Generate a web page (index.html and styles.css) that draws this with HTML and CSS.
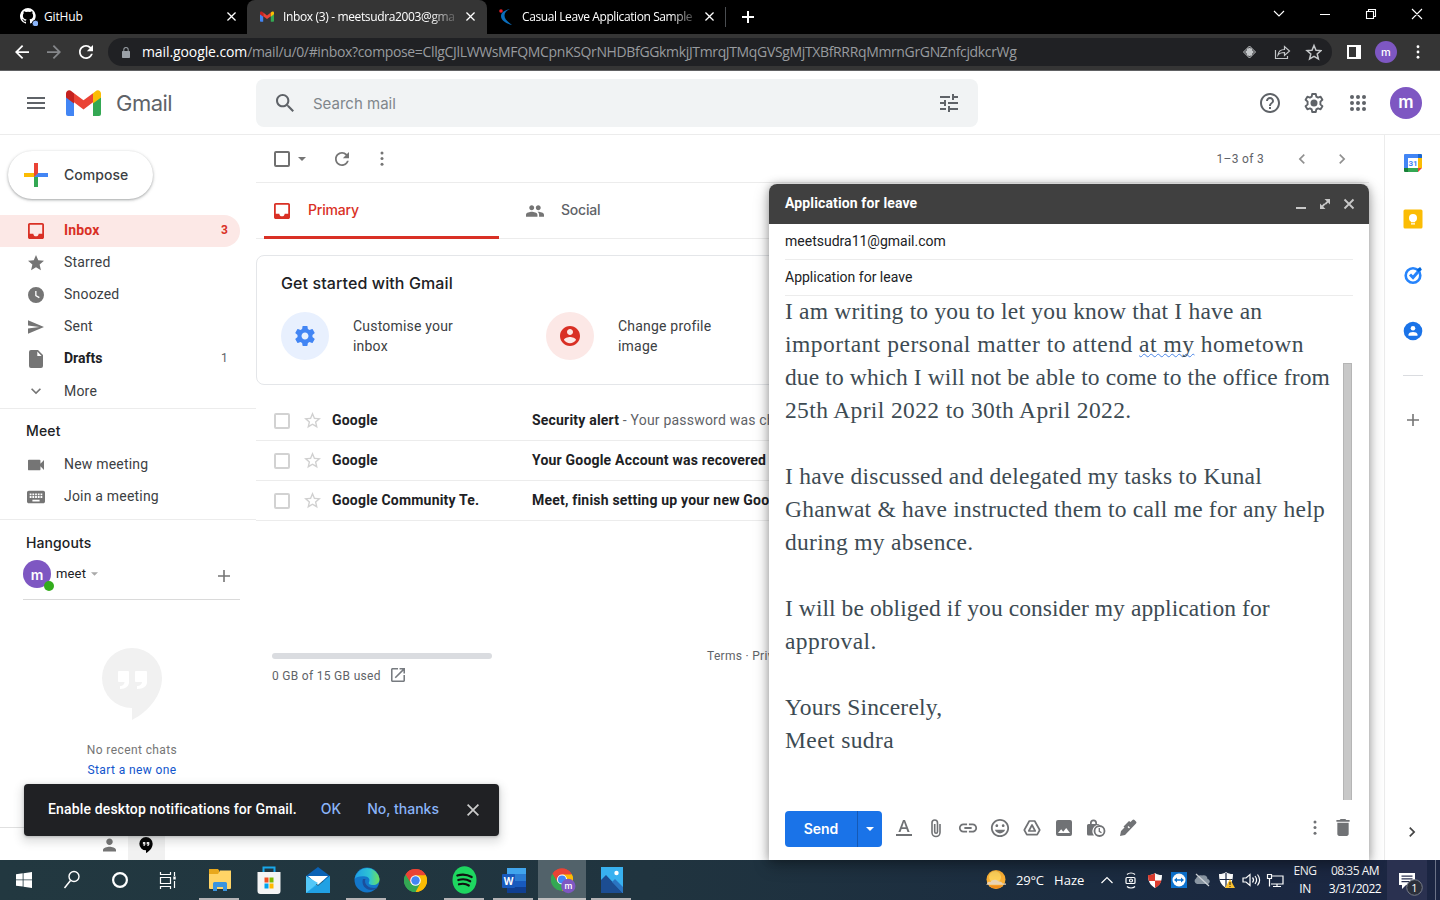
FILE: index.html
```html
<!DOCTYPE html>
<html lang="en">
<head>
<meta charset="utf-8">
<title>Inbox (3) - Gmail</title>
<link rel="stylesheet" href="styles.css">
</head>
<body>
<svg class="sprite" width="0" height="0">
  <symbol id="inbox" viewBox="3 3 18 18"><path d="M19 3H5c-1.1 0-2 .9-2 2v14c0 1.1.9 2 2 2h14c1.1 0 2-.9 2-2V5c0-1.1-.9-2-2-2zm0 12h-4c0 1.66-1.35 3-3 3s-3-1.34-3-3H5V5h14v10z"/></symbol>
  <symbol id="star" viewBox="2 2 20 20"><path d="M12 17.27L18.18 21l-1.64-7.03L22 9.24l-7.19-.61L12 2 9.19 8.63 2 9.24l5.46 4.73L5.82 21z"/></symbol>
  <symbol id="star-o" viewBox="2 2 20 20"><path d="M22 9.24l-7.19-.62L12 2 9.19 8.63 2 9.24l5.46 4.73L5.82 21 12 17.27 18.18 21l-1.63-7.03L22 9.24zM12 15.4l-3.76 2.27 1-4.28-3.32-2.88 4.38-.38L12 6.1l1.71 4.04 4.38.38-3.32 2.88 1 4.28L12 15.4z"/></symbol>
  <symbol id="gear" viewBox="2 2 20 20"><path d="M19.43 12.98c.04-.32.07-.64.07-.98s-.03-.66-.07-.98l2.11-1.65c.19-.15.24-.42.12-.64l-2-3.46c-.12-.22-.39-.3-.61-.22l-2.49 1c-.52-.4-1.08-.73-1.69-.98l-.38-2.65C14.46 2.18 14.25 2 14 2h-4c-.25 0-.46.18-.49.42l-.38 2.65c-.61.25-1.17.59-1.69.98l-2.49-1c-.23-.09-.49 0-.61.22l-2 3.46c-.13.22-.07.49.12.64l2.11 1.65c-.04.32-.07.65-.07.98s.03.66.07.98l-2.11 1.65c-.19.15-.24.42-.12.64l2 3.46c.12.22.39.3.61.22l2.49-1c.52.4 1.08.73 1.69.98l.38 2.65c.03.24.24.42.49.42h4c.25 0 .46-.18.49-.42l.38-2.65c.61-.25 1.17-.59 1.69-.98l2.49 1c.23.09.49 0 .61-.22l2-3.46c.12-.22.07-.49-.12-.64l-2.11-1.65zM12 15.5c-1.93 0-3.5-1.57-3.5-3.5s1.57-3.5 3.5-3.5 3.5 1.57 3.5 3.5-1.57 3.5-3.5 3.5z"/></symbol>
  <symbol id="x" viewBox="5 5 14 14"><path d="M19 6.41L17.59 5 12 10.59 6.41 5 5 6.41 10.59 12 5 17.59 6.41 19 12 13.41 17.59 19 19 17.59 13.41 12z"/></symbol>
  <symbol id="left" viewBox="0 0 24 24"><path d="M15.41 7.41L14 6l-6 6 6 6 1.41-1.41L10.83 12z"/></symbol>
  <symbol id="right" viewBox="0 0 24 24"><path d="M10 6L8.59 7.41 13.17 12l-4.58 4.59L10 18l6-6z"/></symbol>
  <symbol id="down" viewBox="0 0 24 24"><path d="M16.59 8.59L12 13.17 7.41 8.59 6 10l6 6 6-6z"/></symbol>
  <symbol id="caret" viewBox="0 0 8 4"><path d="M0 0h8L4 4z"/></symbol>
  <symbol id="dots" viewBox="8 2 8 20"><circle cx="12" cy="4.5" r="2"/><circle cx="12" cy="12" r="2"/><circle cx="12" cy="19.5" r="2"/></symbol>
  <symbol id="refresh" viewBox="4 4 16 16"><path d="M17.65 6.35C16.2 4.9 14.21 4 12 4c-4.42 0-7.99 3.58-7.99 8s3.57 8 7.99 8c3.73 0 6.84-2.55 7.73-6h-2.08c-.82 2.33-3.04 4-5.65 4-3.31 0-6-2.69-6-6s2.69-6 6-6c1.66 0 3.14.69 4.22 1.78L13 11h7V4l-2.35 2.35z"/></symbol>
  <symbol id="arrow" viewBox="4 4 16 16"><path d="M20 11H7.83l5.59-5.59L12 4l-8 8 8 8 1.41-1.41L7.83 13H20v-2z"/></symbol>
  <symbol id="plus" viewBox="0 0 12 12"><path d="M5.2 0h1.6v5.2H12v1.6H6.8V12H5.2V6.8H0V5.2h5.2z"/></symbol>
  <symbol id="person" viewBox="4 4 16 16"><path d="M12 12c2.21 0 4-1.79 4-4s-1.79-4-4-4-4 1.79-4 4 1.790 4 4 4zm0 2c-2.67 0-8 1.340-8 4v2h16v-2c0-2.660-5.330-4-8-4z"/></symbol>
  <symbol id="hangout" viewBox="0 0 60 72"><path fill-rule="evenodd" d="M30 0a30 30 0 1 0 0 60v12c14-7 30-23 30-42A30 30 0 0 0 30 0zM16 24a1 1 0 0 1 1-1h9a1 1 0 0 1 1 1v10c0 4-3 7-9 7v-3c3 0 4.500-2 4.500-4H17a1 1 0 0 1-1-1zM33 24a1 1 0 0 1 1-1h10a1 1 0 0 1 1 1v10c0 4-3 7-10 7v-3c3 0 5-2 5-4h-6a1 1 0 0 1-1-1z"/></symbol>
  <symbol id="gmail" viewBox="0 0 35 26"><path fill="#4285f4" d="M0 7v17a2 2 0 0 0 2 2h6V12z"/><path fill="#34a853" d="M27 12v14h6a2 2 0 0 0 2-2V7z"/><path fill="#ea4335" d="M8 3.200v9L17.500 19.400 27 12.200V3.200l-9.500 7z"/><path fill="#c5221f" d="M0 3.500V7.500l8 6V3.200L5.500 1.200C3.300-.8 0 .600 0 3.500z"/><path fill="#fbbc04" d="M27 3.200v10.300l8-6v-4c0-2.900-3.300-4.300-5.500-2.300z"/></symbol>
  <symbol id="chrome" viewBox="0 0 24 24"><path fill="#ea4335" d="M12 12 1.600 6A12 12 0 0 1 22.400 6z"/><path fill="#fbbc04" d="M12 12 22.400 6A12 12 0 0 1 12 24z"/><path fill="#34a853" d="M12 12v12A12 12 0 0 1 1.600 6z"/><path fill="#ea4335" d="M12 6.500h10.700L22.400 6A12 12 0 0 0 1.600 6L7 15z"/><path fill="#fbbc04" d="M22.700 6.500H12l4.800 8.300L12 24A12 12 0 0 0 22.700 6.500z"/><path fill="#34a853" d="M1.600 6l5.600 8.800H17L12 24A12 12 0 0 1 1.600 6z"/><circle cx="12" cy="12" r="5.500" fill="#fff"/><circle cx="12" cy="12" r="4.400" fill="#4285f4"/></symbol>
</svg>
<div class="screen">
  <div class="tabstrip">
    <div class="tab tab-github">
      <svg class="ico-18" viewBox="0 0 18 18"><path fill="#fff" d="M8 0a8 8 0 0 0-2.530 15.590c.4.070.550-.170.550-.380V13.700c-2.230.490-2.690-1.070-2.690-1.070-.360-.930-.890-1.170-.890-1.170-.730-.5.050-.490.050-.490.810.060 1.230.830 1.230.830.720 1.220 1.880.870 2.330.670.070-.520.280-.870.510-1.070-1.780-.2-3.640-.890-3.640-3.950 0-.870.310-1.590.820-2.150-.080-.2-.360-1.020.080-2.120 0 0 .670-.220 2.200.820a7.500 7.500 0 0 1 4 0c1.530-1.040 2.200-.820 2.200-.820.440 1.100.160 1.920.080 2.120.510.560.820 1.270.820 2.150 0 3.070-1.870 3.750-3.650 3.950.290.250.540.730.540 1.480v2.200c0 .210.150.460.550.380A8 8 0 0 0 8 0z"/><circle cx="15.500" cy="15.500" r="3.300" fill="#8ab4f8" stroke="#000" stroke-width=".8"/></svg>
      <span class="tab-title t-github">GitHub</span>
      <svg class="tab-x"><use href="#x"/></svg>
    </div>
    <div class="tab tab-active">
      <svg class="tab-gmail"><use href="#gmail"/></svg>
      <span class="tab-title fade-grey">Inbox (3) - meetsudra2003@gma</span>
      <svg class="tab-x"><use href="#x"/></svg>
    </div>
    <div class="tab tab-leave">
      <svg class="ico-16" viewBox="0 0 16 16"><path fill="#0a6ebd" d="M11 0C5 1.500 2 3.500 2 7c0 4.500 5 7.500 11 9C8 12 5.500 10 5.500 6.500 5.500 3.500 7.500 1.500 11 0z"/><circle cx="2" cy="2" r="1.800" fill="#e8202a"/></svg>
      <span class="tab-title fade-black">Casual Leave Application Sample</span>
      <svg class="tab-x"><use href="#x"/></svg>
    </div>
    <div class="tab-sep"></div>
    <svg class="newtab" viewBox="0 0 12 12"><path d="M5 0h2v5h5v2H7v5H5V7H0V5h5z"/></svg>
    <svg class="winctl" viewBox="0 0 150 20"><path d="M1 7l5 5 5-5M47 10.500h10M93.500 7.500h7v7h-7zM95.500 7.500v-2h7v7h-2M139 5l10 10M149 5l-10 10" fill="none" stroke="#fff" stroke-width="1.100"/></svg>
  </div>
  <div class="toolbar">
    <svg class="nav-ico"><use href="#arrow"/></svg>
    <svg class="nav-ico fwd"><use href="#arrow"/></svg>
    <svg class="nav-ico"><use href="#refresh"/></svg>
    <div class="omnibox">
      <svg class="lock" viewBox="0 0 8 11"><path fill="#9aa0a6" fill-rule="evenodd" d="M1.300 4V2.700a2.700 2.700 0 0 1 5.400 0V4H7.300a.7.7 0 0 1 .7.700v5.600a.7.7 0 0 1-.7.700H.7a.7.7 0 0 1-.7-.7V4.700A.7.7 0 0 1 .7 4zM2.300 4h3.400V2.700a1.700 1.700 0 0 0-3.400 0z"/></svg>
      <span class="url"><b>mail.google.com</b><i>/mail/u/0/#inbox?compose=CllgCJlLWWsMFQMCpnKSQrNHDBfGGkmkjJTmrqJTMqGVSgMjTXBfRRRqMmrnGrGNZnfcjdkcrWg</i></span>
      <svg class="omni-icons" viewBox="0 0 80 20"><path d="M7.500 4L1.500 10l6 6 6-6z" fill="none" stroke="#c4c7c9" stroke-width="1"/><path d="M7.500 5.500 12 10l-4.500 4.500L3 10z" fill="#c4c7c9"/><path d="M5 6.500h5v7H5z" fill="#c4c7c9"/><path d="M33.500 8v8.500h12V14M36 13c.5-4 3-5.500 6.500-5.500V4.500l5 4.500-5 4.500V10.500c-3 0-5 .5-6.500 2.500z" fill="none" stroke="#c4c7c9" stroke-width="1.200"/><path d="M72 3.500l2 4.700 5 .400-3.800 3.300 1.200 5L72 14.300l-4.400 2.600 1.200-5L65 8.600l5-.4z" fill="none" stroke="#c4c7c9" stroke-width="1.500"/></svg>
    </div>
    <svg class="sidepanel" viewBox="0 0 14 14"><path fill="#fff" fill-rule="evenodd" d="M0 0h14v14H0zM2 2v10h7V2z"/></svg>
    <span class="avatar av-22">m</span>
    <svg class="menu-dots"><use href="#dots"/></svg>
  </div>

  <div class="app">
    <div class="gbar">
      <svg class="burger" viewBox="3 6 18 12"><path d="M3 18h18v-2H3v2zm0-5h18v-2H3v2zm0-7v2h18V6H3z"/></svg>
      <svg class="logo"><use href="#gmail"/></svg>
      <span class="wordmark">Gmail</span>
      <div class="search">
        <svg class="s-ico" viewBox="3 3 17.500 17.500"><path d="M15.500 14h-.79l-.28-.27C15.410 12.590 16 11.110 16 9.500 16 5.910 13.090 3 9.500 3S3 5.910 3 9.500 5.910 16 9.500 16c1.610 0 3.090-.59 4.230-1.570l.27.280v.79l5 4.990L20.490 19l-4.990-5zm-6 0C7.010 14 5 11.990 5 9.500S7.010 5 9.500 5 14 7.010 14 9.500 11.990 14 9.500 14z"/></svg>
        <span class="ph">Search mail</span>
        <svg class="s-ico" viewBox="3 3 18 18"><path d="M3 17v2h6v-2H3zM3 5v2h10V5H3zm10 16v-2h8v-2h-8v-2h-2v6h2zM7 9v2H3v2h4v2h2V9H7zm14 4v-2H11v2h10zm-6-4h2V7h4V5h-4V3h-2v6z"/></svg>
      </div>
      <div class="gactions">
        <svg viewBox="2 2 20 20"><path d="M11 18h2v-2h-2v2zm1-16C6.480 2 2 6.480 2 12s4.480 10 10 10 10-4.480 10-10S17.520 2 12 2zm0 18c-4.410 0-8-3.590-8-8s3.590-8 8-8 8 3.590 8 8-3.590 8-8 8zm0-14c-2.210 0-4 1.790-4 4h2c0-1.100.9-2 2-2s2 .9 2 2c0 2-3 1.750-3 5h2c0-2.250 3-2.500 3-5 0-2.210-1.790-4-4-4z"/></svg>
        <svg viewBox="0 0 20 20"><path fill="none" stroke="#5f6368" stroke-width="1.900" stroke-linejoin="round" d="M8.200 1h3.600l.5 2.600 1.800 1 2.500-.9 1.800 3.100-2 1.800v2.800l2 1.800-1.800 3.100-2.500-.9-1.800 1-.5 2.600H8.200l-.5-2.600-1.800-1-2.500.9-1.800-3.100 2-1.800V8.600l-2-1.800 1.800-3.100 2.500.9 1.800-1z"/><circle cx="10" cy="10" r="3.500"/></svg>
        <svg viewBox="0 0 20 20"><circle cx="4" cy="4" r="2"/><circle cx="10" cy="4" r="2"/><circle cx="16" cy="4" r="2"/><circle cx="4" cy="10" r="2"/><circle cx="10" cy="10" r="2"/><circle cx="16" cy="10" r="2"/><circle cx="4" cy="16" r="2"/><circle cx="10" cy="16" r="2"/><circle cx="16" cy="16" r="2"/></svg>
        <span class="avatar av-32">m</span>
      </div>
    </div>

    <div class="body">
      <div class="side">
        <div class="compose-btn">
          <svg viewBox="0 0 24 24"><path fill="#ea4335" d="M10 0h4v12l-4 0z"/><path fill="#34a853" d="M10 12h4v12h-4z"/><path fill="#fbbc04" d="M0 10h10l4 0-4 4H0z"/><path fill="#4285f4" d="M14 10h10v4H10z"/><path fill="#ea4335" d="M10 10h4l-4 4z"/></svg>
          <span>Compose</span>
        </div>
        <div class="nav on"><svg><use href="#inbox"/></svg><span>Inbox</span><em>3</em></div>
        <div class="nav"><svg><use href="#star"/></svg><span>Starred</span></div>
        <div class="nav"><svg viewBox="0 0 16 16"><path fill-rule="evenodd" d="M8 0a8 8 0 1 0 0 16A8 8 0 0 0 8 0zM7.200 4h1.300v4.200l3.200 1.900-.7 1.100-3.800-2.300z"/></svg><span>Snoozed</span></div>
        <div class="nav"><svg viewBox="2 2 21 20"><path d="M2.010 21L23 12 2.010 3 2 10l15 2-15 2z"/></svg><span>Sent</span></div>
        <div class="nav bold"><svg viewBox="0 0 16 18" class="tall"><path fill-rule="evenodd" d="M3 0h7l5 5v11a2 2 0 0 1-2 2H3a2 2 0 0 1-2-2V2a2 2 0 0 1 2-2zM9.300 1.500V6h4.300z"/></svg><span>Drafts</span><em>1</em></div>
        <div class="nav more"><svg><use href="#down"/></svg><span>More</span></div>
        <div class="side-head first">Meet</div>
        <div class="nav"><svg viewBox="3 3 18 18"><path d="M17 10.500V7c0-.55-.45-1-1-1H4c-.55 0-1 .45-1 1v10c0 .55.45 1 1 1h12c.55 0 1-.45 1-1v-3.500l4 4v-11l-4 4z"/></svg><span>New meeting</span></div>
        <div class="nav kb"><svg viewBox="2 4 20 16"><path d="M20 5H4c-1.100 0-1.990.9-1.990 2L2 17c0 1.100.9 2 2 2h16c1.100 0 2-.9 2-2V7c0-1.100-.9-2-2-2zm-9 3h2v2h-2V8zm0 3h2v2h-2v-2zM8 8h2v2H8V8zm0 3h2v2H8v-2zm-1 2H5v-2h2v2zm0-3H5V8h2v2zm9 7H8v-2h8v2zm0-4h-2v-2h2v2zm0-3h-2V8h2v2zm3 3h-2v-2h2v2zm0-3h-2V8h2v2z"/></svg><span>Join a meeting</span></div>
        <div class="side-head second">Hangouts</div>
        <div class="me">
          <span class="avatar av-28">m<i></i></span><span class="me-name">meet</span><svg class="me-caret"><use href="#caret"/></svg>
          <svg class="me-plus"><use href="#plus"/></svg>
        </div>
        <div class="chats">
          <svg class="hang"><use href="#hangout"/></svg>
          <p>No recent chats</p><p class="link">Start a new one</p>
        </div>
        <div class="side-tabs">
          <svg class="st-person"><use href="#person"/></svg>
          <div class="st-hang"><svg><use href="#hangout"/></svg></div>
        </div>
      </div>

      <div class="main">
        <div class="mtool">
          <i class="box dark"></i><svg class="m-caret"><use href="#caret"/></svg>
          <svg class="m-ref"><use href="#refresh"/></svg><svg class="m-dots"><use href="#dots"/></svg>
          <span class="count">1–3 of 3</span><svg class="m-lr"><use href="#left"/></svg><svg class="m-lr"><use href="#right"/></svg>
        </div>
        <div class="mtabs">
          <div class="mtab sel"><svg><use href="#inbox"/></svg><span>Primary</span></div>
          <div class="mtab"><svg class="wide" viewBox="1 5 22 14"><path d="M16 11c1.660 0 2.990-1.340 2.990-3S17.660 5 16 5s-3 1.340-3 3 1.340 3 3 3zm-8 0c1.660 0 2.990-1.340 2.990-3S9.660 5 8 5 5 6.340 5 8s1.340 3 3 3zm0 2c-2.330 0-7 1.170-7 3.500V19h14v-2.500c0-2.330-4.670-3.500-7-3.500zm8 0c-.29 0-.62.020-.97.050 1.160.84 1.970 1.970 1.970 3.450V19h6v-2.500c0-2.330-4.670-3.500-7-3.500z"/></svg><span>Social</span></div>
        </div>
        <div class="card">
          <div class="card-title">Get started with Gmail</div>
          <div class="card-items">
            <div class="ci blue"><div><svg><use href="#gear"/></svg></div><span>Customise your<br>inbox</span></div>
            <div class="ci red"><div><svg viewBox="2 2 20 20"><path d="M12 2C6.480 2 2 6.480 2 12s4.480 10 10 10 10-4.480 10-10S17.520 2 12 2zm0 3c1.660 0 3 1.340 3 3s-1.340 3-3 3-3-1.340-3-3 1.340-3 3-3zm0 14.200c-2.500 0-4.710-1.280-6-3.220.03-1.990 4-3.080 6-3.080 1.990 0 5.970 1.090 6 3.080-1.290 1.940-3.500 3.220-6 3.220z"/></svg></div><span>Change profile<br>image</span></div>
          </div>
        </div>
        <div class="row"><i class="box"></i><svg><use href="#star-o"/></svg><b class="from">Google</b><b>Security alert</b><span>&nbsp;- Your password was changed</span></div>
        <div class="row"><i class="box"></i><svg><use href="#star-o"/></svg><b class="from">Google</b><b>Your Google Account was recovered</b></div>
        <div class="row"><i class="box"></i><svg><use href="#star-o"/></svg><b class="from">Google Community Te.</b><b>Meet, finish setting up your new Google</b></div>
        <div class="mfoot">
          <div class="storage"><div class="bar"></div><div class="used">0 GB of 15 GB used<svg viewBox="3 3 18 18"><path d="M19 19H5V5h7V3H5c-1.110 0-2 .9-2 2v14c0 1.100.890 2 2 2h14c1.100 0 2-.9 2-2v-7h-2v7zM14 3v2h3.590l-9.830 9.830 1.410 1.410L19 6.410V10h2V3h-7z"/></svg></div></div>
          <div class="terms">Terms · Privacy</div>
        </div>
      </div>

      <div class="rail">
        <svg class="r-ico" viewBox="0 0 20 20"><path fill="#4285f4" d="M1 2a1 1 0 0 1 1-1h13v4H5v10H1z"/><path fill="#1967d2" d="M15 1h3a1 1 0 0 1 1 1v3h-4z"/><path fill="#fbbc04" d="M15 5h4v10h-4z"/><path fill="#34a853" d="M5 15h10v4H5z"/><path fill="#188038" d="M1 15h4v4H2a1 1 0 0 1-1-1z"/><path fill="#ea4335" d="M15 15h4l-4 4z"/><path fill="#fff" d="M5 5h10v10H5z"/><text x="10" y="13" text-anchor="middle" font-family="Roboto" font-weight="700" font-size="8" fill="#4285f4">31</text></svg>
        <svg class="r-ico" viewBox="0 0 20 20"><rect x=".5" y=".5" width="19" height="19" rx="1.500" fill="#fbbc04"/><circle cx="10" cy="9" r="4" fill="#fff"/><path fill="#fff" d="M8 11h4v2.300H8zM8 14.200h4v1.300H8z"/></svg>
        <svg class="r-ico" viewBox="0 0 20 20"><circle cx="10" cy="10.500" r="7.300" fill="none" stroke="#2684fc" stroke-width="2.600"/><path d="M7 9.500l3 3L17.500 4" fill="none" stroke="#2684fc" stroke-width="3"/><path d="M14.500 5.800L18 3.300" stroke="#0066da" stroke-width="3"/></svg>
        <svg class="r-ico" viewBox="0 0 20 20"><circle cx="10" cy="10" r="9.300" fill="#1a73e8"/><circle cx="10" cy="7.300" r="2.300" fill="#fff"/><path fill="#fff" d="M5.500 14.700v-1.200c0-1.700 2.500-2.500 4.500-2.500s4.500.8 4.500 2.500v1.200z"/></svg>
        <div class="r-sep"></div>
        <svg class="r-plus"><use href="#plus"/></svg>
        <svg class="r-chev"><use href="#right"/></svg>
      </div>
    </div>

    <div class="toast"><span>Enable desktop notifications for Gmail.</span><b class="ok">OK</b><b class="no">No, thanks</b><svg><use href="#x"/></svg></div>

    <div class="mail">
      <div class="mail-head"><span>Application for leave</span>
        <svg class="mh" viewBox="0 0 60 12"><path d="M0 9h10v2H0z"/><path d="M28.500 1H34v5.500l-1.900-1.900-2.200 2.200-1.300-1.300 2.200-2.200zM29.500 11H24V5.500l1.900 1.900 2.200-2.200 1.300 1.300-2.200 2.200z"/><path d="M48.500 1.500l9 9M57.500 1.500l-9 9" stroke="#c8c8c8" stroke-width="1.800"/></svg>
      </div>
      <div class="field">meetsudra11@gmail.com</div>
      <div class="field subj">Application for leave</div>
      <div class="letter">
        <div class="text">
          <p class="l1">I am writing to you to let you know that I have an</p>
          <p class="l2">important personal matter to attend <u>at my</u> hometown</p>
          <p class="l3">due to which I will not be able to come to the office from</p>
          <p class="l4">25th April 2022 to 30th April 2022.</p>
          <p class="gap l5">I have discussed and delegated my tasks to Kunal</p>
          <p class="l6">Ghanwat &amp; have instructed them to call me for any help</p>
          <p class="l7">during my absence.</p>
          <p class="gap l8">I will be obliged if you consider my application for</p>
          <p class="l9">approval.</p>
          <p class="gap l10">Yours Sincerely,</p>
          <p class="l11">Meet sudra</p>
        </div>
        <div class="scroll"></div>
      </div>
      <div class="mail-foot">
        <div class="send"><span>Send</span><div><svg><use href="#caret"/></svg></div></div>
        <div class="tools">
          <svg viewBox="0 0 20 20"><path d="M2 16h16v2H2zM9 2h2l4.600 12h-2.100l-1.100-3.100H7.600L6.500 14H4.400zM8.200 9.200h3.600L10 4.100z"/></svg>
          <svg viewBox="0 0 20 20"><path d="M14 6v8.500a4 4 0 0 1-8 0V4.700a2.700 2.700 0 0 1 5.500 0v9.100a1.400 1.400 0 0 1-2.800 0V6" fill="none" stroke="#707275" stroke-width="1.600"/></svg>
          <svg viewBox="1 1 22 22"><path d="M3.900 12c0-1.710 1.390-3.100 3.100-3.100h4V7H7c-2.760 0-5 2.240-5 5s2.240 5 5 5h4v-1.900H7c-1.710 0-3.100-1.390-3.100-3.100zM8 13h8v-2H8v2zm9-6h-4v1.900h4c1.710 0 3.100 1.390 3.100 3.100s-1.390 3.100-3.100 3.100h-4V17h4c2.760 0 5-2.240 5-5s-2.240-5-5-5z"/></svg>
          <svg viewBox="1 1 22 22"><path d="M11.990 2C6.470 2 2 6.480 2 12s4.470 10 9.990 10C17.520 22 22 17.520 22 12S17.520 2 11.990 2zM12 20c-4.420 0-8-3.580-8-8s3.580-8 8-8 8 3.580 8 8-3.580 8-8 8zm3.500-9c.83 0 1.500-.67 1.500-1.500S16.330 8 15.500 8 14 8.670 14 9.500s.67 1.500 1.500 1.500zm-7 0c.83 0 1.500-.67 1.500-1.500S9.330 8 8.500 8 7 8.670 7 9.500 7.670 11 8.500 11zm3.500 7c2.610 0 4.830-1.670 5.650-4H6.350c.82 2.330 3.040 4 5.650 4z"/></svg>
          <svg viewBox="0 0 20 20"><path d="M7.300 3h5.400l5 9-2.500 4.700H4.800L2.300 12zM10 7l-3.200 6h6.400z" fill="none" stroke="#707275" stroke-width="1.700" stroke-linejoin="round"/></svg>
          <svg viewBox="0 0 20 20"><path fill-rule="evenodd" d="M4 2h12a2 2 0 0 1 2 2v12a2 2 0 0 1-2 2H4a2 2 0 0 1-2-2V4a2 2 0 0 1 2-2zM4 15h12l-3.800-5-3 3.800-2-2.500z"/></svg>
          <svg viewBox="0 0 20 20"><path fill-rule="evenodd" d="M4 6V5a3.500 3.500 0 0 1 7 0v1h1.500c.6 0 1 .3 1 .8A6.500 6.500 0 0 0 8 17.500H2.500a1.500 1.500 0 0 1-1.500-1.500V7.500A1.500 1.500 0 0 1 2.500 6zM5.700 6h3.600V5a1.800 1.800 0 0 0-3.600 0z"/><circle cx="13.500" cy="13" r="5" fill="#fff" stroke="#707275" stroke-width="1.800"/><path d="M13.300 10v3.300l2.200 1.500" fill="none" stroke="#707275" stroke-width="1.300"/></svg>
          <svg viewBox="0 0 20 20"><path fill-rule="evenodd" d="M2 18l1-5 5-5L6.500 9.500l-1-1L11 3l1.500 1 2-2a1.400 1.400 0 0 1 2 0l1.500 1.500a1.400 1.400 0 0 1 0 2L7 17zM9.500 9l1.500 1.500 1-1L10.500 8z"/></svg>
        </div>
        <svg class="f-dots"><use href="#dots"/></svg>
        <svg class="f-trash" viewBox="5 3 14 18"><path d="M6 19c0 1.100.9 2 2 2h8c1.100 0 2-.9 2-2V7H6v12zM19 4h-3.500l-1-1h-5l-1 1H5v2h14V4z"/></svg>
      </div>
    </div>
  </div>

  <div class="taskbar">
    <div class="tb sys"><svg width="16" height="16" viewBox="0 0 16 16"><path fill="#fff" d="M0 2.200l6.700-.9v6.200H0zM7.500 1.200L16 0v7.500H7.500zM0 8.300h6.700v6.300L0 13.700zM7.500 8.300H16V16l-8.500-1.200z"/></svg></div>
    <div class="tb sys"><svg width="18" height="20" viewBox="0 0 18 20"><circle cx="11" cy="6.500" r="5" fill="none" stroke="#fff" stroke-width="1.400"/><path d="M7.500 10.500L1.500 18" stroke="#fff" stroke-width="1.500"/></svg></div>
    <div class="tb sys"><svg width="18" height="18" viewBox="0 0 18 18"><circle cx="9" cy="9" r="6.900" fill="none" stroke="#fff" stroke-width="2.200"/></svg></div>
    <div class="tb sys"><svg width="18" height="18" viewBox="0 0 18 18"><path d="M1.500 1v2.500h10V1M1.500 6.500h10v6h-10zM1.500 18v-2.500h10V18M15.500 1v4M15.500 10v7" fill="none" stroke="#fff" stroke-width="1.200"/><path d="M14.300 5.500h2.400v3h-2.400z" fill="#fff"/></svg></div>
    <div class="apps">
      <div class="tb run"><svg width="22" height="22" viewBox="0 0 22 22"><path fill="#e8a81c" d="M0 0h9l1.500 2H10v3H0z"/><path fill="#ffd466" d="M0 5h9l2-3.500h11V19a1 1 0 0 1-1 1H1a1 1 0 0 1-1-1z"/><path fill="#3a93dd" d="M4 22v-7.500A1.500 1.500 0 0 1 5.500 13h11a1.500 1.500 0 0 1 1.500 1.500V22h-4v-4H8v4z"/></svg></div>
      <div class="tb"><svg width="24" height="28" viewBox="0 0 24 28"><path fill="none" stroke="#19a7ea" stroke-width="2" d="M6.500 8V1.500h11V8"/><path fill="#f4f4f4" d="M.5 6h23v19a3 3 0 0 1-3 3h-17a3 3 0 0 1-3-3z"/><path fill="#f25022" d="M7.500 11.500h4v5h-4z"/><path fill="#7fba00" d="M12.500 11.500h4v5h-4z"/><path fill="#00a4ef" d="M7.500 17.500h4v5h-4z"/><path fill="#ffb900" d="M12.500 17.500h4v5h-4z"/></svg></div>
      <div class="tb"><svg width="24" height="27" viewBox="0 0 24 27"><path fill="#0a62b5" d="M0 9L12 0l12 9v5H0z"/><path fill="#fff" d="M2 9h20l-10 9z"/><path fill="#29b0ee" d="M0 9l12 10L24 9v17H0z"/><path fill="#54c8f8" d="M0 26L12 16l-12-7z"/><path fill="#1b95dd" d="M24 9L0 26h24z" opacity=".55"/></svg></div>
      <div class="tb run"><svg width="26" height="26" viewBox="0 0 26 26"><defs><linearGradient id="e1" x1="0" x2="1"><stop stop-color="#1e9ee5"/><stop offset=".6" stop-color="#2dc4d4"/><stop offset="1" stop-color="#6fdf57"/></linearGradient></defs><circle cx="13" cy="13" r="12.500" fill="#1376c9"/><path fill="url(#e1)" d="M.7 12A12.500 12.500 0 0 1 25.500 12c0 4-3 6-6.500 6-3 0-5-1-4-3 .8-1.200 1-5-3.500-5.500C6 9 2 10 .7 12z"/><path fill="#1b4f9c" d="M9 12c-2 5 2 11 8 11 3 0 5-.8 7-2.500-3 .5-8 1-11-2-2-2-2.500-4.500-1.500-6.500z"/></svg></div>
      <div class="tb"><svg width="23" height="23"><use href="#chrome"/></svg></div>
      <div class="tb run"><svg width="25" height="28" viewBox="0 0 26 28" preserveAspectRatio="none"><ellipse cx="13" cy="14" rx="12.500" ry="13.800" fill="#1ed760"/><path d="M5.500 9.500c5-1.500 10.500-1 15 1.500M6.500 14c4.500-1.300 9-.8 12.500 1.300M7.200 18.300c3.800-1 7.300-.7 10.300 1.200" fill="none" stroke="#111" stroke-width="2.200" stroke-linecap="round"/></svg></div>
      <div class="tb run"><svg width="24" height="27" viewBox="0 0 24 27"><path fill="#41a5ee" d="M5 1h19v6H5z"/><path fill="#2b7cd3" d="M5 7h19v7H5z"/><path fill="#185abd" d="M5 14h19v6H5z"/><path fill="#103f91" d="M5 20h19v6H5z"/><rect y="7" width="13" height="14" rx="1" fill="#185abd"/><text x="6.500" y="18" text-anchor="middle" font-family="Open Sans" font-weight="700" font-size="10" fill="#fff">W</text></svg></div>
      <div class="tb act"><svg width="27" height="29" viewBox="0 0 27 29"><use href="#chrome" width="22" height="23" x="2" y="3"/><circle cx="19.300" cy="21" r="7.200" fill="#7e57c2"/><text x="19.300" y="24" text-anchor="middle" font-family="Roboto" font-weight="500" font-size="9" fill="#fff">m</text></svg></div>
      <div class="tb run"><svg width="22" height="26" viewBox="0 0 22 26"><path fill="#38b1f0" d="M0 0h22v26H0z"/><path fill="#1c4d92" d="M0 13l5-5 17 18H0z"/><path fill="#2a74c2" d="M11 15l3-3 8 8v6z"/><circle cx="15.500" cy="6" r="2.200" fill="#fff"/></svg></div>
    </div>
    <div class="tray">
      <svg width="22" height="20" viewBox="0 0 22 20"><circle cx="11" cy="9.500" r="9.500" fill="#fbb034"/><circle cx="10" cy="7" r="6" fill="#ffd25a"/><path fill="#e9d3b4" d="M2 14c0-2 2-2.500 3.500-2C7 9 12 9 13.500 11.500c2 0 3.500.5 4 2h3.500v1.200H1z"/><path fill="#f08c1c" d="M4 15.500h14a9.500 9.500 0 0 1-14 0z"/></svg>
      <span class="temp">29°C</span><span class="haze">Haze</span>
      <svg class="sysico" viewBox="0 0 192 20"><g fill="none" stroke="#fff" stroke-width="1.200"><path d="M6.500 13l5.500-5.500L17.500 13M32 7.500h7a1 1 0 0 1 1 1v4a1 1 0 0 1-1 1h-7a1 1 0 0 1-1-1v-4a1 1 0 0 1 1-1zM32 4.500c2-2 6-2 8 0M32 16.500c2 2 6 2 8 0"/><circle cx="36" cy="10.500" r="1.500"/><path d="M148 8h3l4-3.500v11L151 12h-3zM157.500 7.500c1.300 1.500 1.300 3.500 0 5M160 6c2 2.500 2 5.500 0 8M162.500 4.500c2.700 3.500 2.700 7.500 0 11"/><path d="M176 6h12v8h-12M182 14v2.500M178 16.500h8M172.500 4.500h4v4h-4zM174.500 8.500v8"/></g><path fill="#fff" d="M53 5c3 0 5-.5 7-2 2 1.500 4 2 7 2 0 6-2 10-7 13-5-3-7-7-7-13z"/><path fill="#dd3b2e" d="M60 3c-2 1.500-4 2-7 2 0 2 .2 4 .8 6H60zM60 10.500h6.500C65.500 14 63.500 16.300 60 18z"/><rect x="76" y="2" width="16" height="16" fill="#0c72cf"/><circle cx="84" cy="10" r="6.500" fill="#fff"/><path fill="#0c72cf" d="M79 10l3-2.500v1.700h4V7.500l3 2.500-3 2.500v-1.700h-4v1.700z"/><path fill="#8b97a3" d="M102 14a3 3 0 0 1-1-5.500c1-2.500 3.500-4 6-3 3-1 5.500.5 5.500 3.500 3 .5 3 4.500 0 5z"/><path d="M101 4l13 12" stroke="#d0d5da" stroke-width="1.200"/><path fill="#fff" d="M124 4c3 0 5-.5 7-2 2 1.500 4 2 7 2 0 7-2 11-7 14-5-3-7-7-7-14z"/><path d="M131 3v14M124.500 9.500h13" stroke="#1c2944" stroke-width="1.200"/><path fill="#fbc02d" d="M135 9l5 9h-10z"/><path d="M135 12v3M135 16v1" stroke="#222"/></svg>
      <div class="stack lang"><span>ENG</span><span>IN</span></div>
      <div class="stack clock"><span>08:35 AM</span><span>3/31/2022</span></div>
      <div class="notif"><svg width="26" height="26" viewBox="0 0 26 26"><path fill="#fff" fill-rule="evenodd" d="M2 3h16v12H9l-4 4v-4H2zM4.500 5.500v1.200h11V5.500zM4.500 8.300v1.200h11V8.300zM4.500 11v1.200h8V11z"/><circle cx="17.500" cy="17.500" r="7.800" fill="#2b2f3a" stroke="#777c88"/><text x="17.500" y="21.500" text-anchor="middle" font-family="Open Sans" font-size="11" fill="#fff">1</text></svg></div>
      <div class="peek"></div>
    </div>
  </div>
</div>
</body>
</html>
```
FILE: styles.css
```css
* { box-sizing: border-box; }
body { margin: 0; font-family: Roboto, sans-serif; font-size: 14px; color: #202124; }
p { margin: 0; }
svg { flex: none; display: block; }
span { white-space: nowrap; }
.sprite { position: absolute; }
.screen { width: 1440px; height: 900px; display: flex; flex-direction: column; overflow: hidden; background: #fff; }

/* browser chrome */
.tabstrip { height: 34px; background: #000; display: flex; align-items: center; font: 12px "Open Sans", sans-serif; color: #fff; flex: none; }
.tab { height: 34px; display: flex; align-items: center; padding-bottom: 1px; }
.tab-github { width: 247px; padding-left: 20px; padding-right: 11px; }
.tab-active { width: 240px; background: #353535; border-radius: 8px 8px 0 0; padding-left: 13px; padding-right: 12px; }
.tab-leave { width: 238px; padding-left: 12px; padding-right: 11px; }
.tab-title { flex: 1; margin-right: 10px; letter-spacing: -.15px; }
.t-github { margin-left: 6px; }
.fade-grey { margin-left: 9px; margin-right: 8px; letter-spacing: -.36px; -webkit-mask-image: linear-gradient(90deg, #000 84%, rgba(0,0,0,.25) 97%); mask-image: linear-gradient(90deg, #000 84%, rgba(0,0,0,.25) 97%); }
.fade-black { margin-left: 7px; letter-spacing: -.41px; -webkit-mask-image: linear-gradient(90deg, #000 86%, rgba(0,0,0,.3) 98%); mask-image: linear-gradient(90deg, #000 86%, rgba(0,0,0,.3) 98%); }
.ico-18 { width: 18px; height: 18px; }
.ico-16 { width: 16px; height: 16px; }
.tab-gmail { width: 14px; height: 11px; }
.tab-x { width: 9px; height: 9px; fill: #fff; }
.tab-sep { width: 1px; height: 20px; background: #4a4d51; }
.newtab { width: 12px; height: 12px; fill: #fff; margin-left: 16px; }
.winctl { width: 150px; height: 20px; margin: -6px 17px 0 auto; }
.toolbar { height: 37px; background: #353535; border-bottom: 1px solid #606163; display: flex; align-items: center; padding-left: 15px; flex: none; }
.nav-ico { width: 14px; height: 14px; fill: #fff; margin-right: 18px; }
.fwd { fill: #85878a; transform: scaleX(-1); }
.omnibox { width: 1224px; height: 28px; border-radius: 14px; background: #202124; margin-left: -3px; display: flex; align-items: center; padding: 0 10px 0 14px; }
.lock { width: 8px; height: 11px; }
.url { margin: -1px 0 0 12px; font: 14px "Open Sans", sans-serif; color: #989b9f; }
.url b, .url i { font-weight: 400; font-style: normal; }
.url b { color: #fff; letter-spacing: -.1px; }
.url i { letter-spacing: -.35px; }
.omni-icons { width: 80px; height: 20px; margin-left: auto; }
.sidepanel { width: 14px; height: 14px; margin-left: 15px; }
.avatar { background: #7e57c2; color: #fff; border-radius: 50%; display: flex; align-items: center; justify-content: center; font-family: Inter, sans-serif; font-weight: 600; position: relative; flex: none; }
.av-22 { width: 22px; height: 22px; font-size: 11px; font-weight: 500; margin-left: 14px; }
.av-32 { width: 32px; height: 32px; font-size: 17px; padding-bottom: 1px; }
.av-28 { width: 28px; height: 28px; font-size: 14px; }
.av-28 i { position: absolute; right: -3px; bottom: -3px; width: 10px; height: 10px; border-radius: 50%; background: #33ac1c; }
.menu-dots { width: 6px; height: 14px; fill: #fff; margin-left: 18px; }

/* gmail header */
.app { height: 789px; display: flex; flex-direction: column; position: relative; flex: none; }
.gbar { height: 64px; border-bottom: 1px solid #ececec; display: flex; align-items: center; padding-left: 27px; fill: #5f6368; flex: none; }
.burger { width: 18px; height: 12px; }
.logo { width: 35px; height: 26px; margin-left: 21px; }
.wordmark { width: 140px; margin-left: 15px; font: 400 22px Inter, sans-serif; letter-spacing: -.5px; color: #5f6368; }
.search { width: 722px; height: 48px; background: #f1f3f4; border-radius: 8px; display: flex; align-items: center; padding: 0 20px; }
.s-ico { width: 18px; height: 18px; }
.ph { flex: 1; margin: 2px 0 0 19px; font: 400 15px Inter, sans-serif; color: #80868b; }
.gactions { margin-left: auto; padding-right: 18px; display: flex; align-items: center; gap: 24px; }
.gactions svg { width: 20px; height: 20px; }
.gactions .avatar { margin-left: -2px; }

/* sidebar */
.body { flex: 1; display: flex; min-height: 0; }
.side { width: 256px; display: flex; flex-direction: column; padding-top: 16px; color: #3c4043; fill: #757575; position: relative; }
.compose-btn { width: 145px; height: 48px; margin: 0 0 16px 8px; border-radius: 24px; box-shadow: 0 1px 2px rgba(60,64,67,.3), 0 1px 3px 1px rgba(60,64,67,.15); display: flex; align-items: center; padding-left: 16px; font: 500 14px Inter, sans-serif; }
.compose-btn svg { width: 24px; height: 24px; margin-right: 16px; }
.compose-btn span { margin-top: -2px; letter-spacing: .05px; }
.nav { height: 32px; width: 240px; display: flex; align-items: center; padding: 0 12px 2px 28px; letter-spacing: .2px; flex: none; }
.nav svg { width: 16px; height: 16px; margin: 2px 20px 0 0; }
.nav .tall { height: 18px; }
.nav.kb svg { width: 18px; margin-left: -1px; margin-right: 19px; }
.nav em { margin-left: auto; font-style: normal; font-size: 12px; color: #5f6368; }
.nav.bold span { font-weight: 700; color: #202124; letter-spacing: 0; }
.nav.on { background: #fce8e6; border-radius: 0 16px 16px 0; color: #d93025; fill: #d93025; font-weight: 700; letter-spacing: .15px; }
.nav.on em { color: #d93025; }
.nav.more { padding-bottom: 0; }
.nav.more svg { width: 20px; height: 20px; margin: 0 18px 0 -2px; }
.side-head { width: 256px; border-top: 1px solid #ececec; padding-left: 26px; font: 500 14px Inter, sans-serif; color: #202124; flex: none; height: 41px; }
.side-head.first { margin-top: 1px; padding-top: 13px; letter-spacing: .15px; }
.side-head.second { margin-top: 6px; padding-top: 14px; letter-spacing: .1px; }
.me { margin-left: 23px; width: 217px; height: 40px; border-bottom: 1px solid #dadada; display: flex; align-items: flex-start; flex: none; }
.me-name { font-size: 13px; color: #202124; margin: 6px 5px 0 5px; letter-spacing: .15px; }
.me-caret { width: 7px; height: 4px; fill: #aaa; margin-top: 12px; }
.me-plus { width: 12px; height: 12px; margin: 10px 10px 0 auto; }
.chats { margin-top: 48px; padding-left: 8px; display: flex; flex-direction: column; align-items: center; font-size: 12px; line-height: 20px; color: #757575; letter-spacing: .4px; }
.hang { width: 60px; height: 72px; fill: #f1f1f1; margin-bottom: 20px; }
.link { color: #1155cc; }
.side-tabs { height: 33px; margin-top: auto; border-top: 1px solid #e0e0e0; display: flex; align-items: center; }
.st-person { width: 13px; height: 14px; margin: 2px 19px 0 103px; }
.st-hang { width: 37px; height: 32px; margin-left: -7px; background: #f1f1f1; display: flex; align-items: center; justify-content: center; fill: #000; padding: 2px 1px 0 0; }
.st-hang svg { width: 14px; height: 16px; }

/* message list */
.main { width: 1128px; display: flex; flex-direction: column; fill: #757575; }
.mtool { height: 48px; width: 1113px; border-bottom: 1px solid #ececec; display: flex; align-items: center; padding: 0 17px 0 18px; flex: none; }
.box { width: 16px; height: 16px; border: 2px solid #d2d2d2; border-radius: 2px; flex: none; }
.box.dark { border-color: #707070; }
.m-caret { width: 8px; height: 4px; margin-left: 8px; }
.m-ref { width: 14px; height: 14px; margin-left: 29px; }
.m-dots { width: 6px; height: 15px; margin-left: 30px; }
.count { margin: 0 28px 0 auto; font-size: 12px; color: #5f6368; letter-spacing: .3px; }
.m-lr { width: 20px; height: 20px; margin-right: 20px; opacity: .8; }
.m-lr:last-child { margin-right: 0; }
.mtabs { height: 56px; width: 1113px; border-bottom: 1px solid #ececec; display: flex; padding-left: 8px; flex: none; }
.mtab { width: 235px; margin-right: 17px; padding: 0 0 0 10px; display: flex; align-items: center; font: 500 14px Inter, sans-serif; letter-spacing: -.2px; color: #5f6368; height: 56px; }
.mtab svg { width: 16px; height: 16px; margin-right: 18px; }
.mtab svg.wide { width: 18px; height: 12px; margin-right: 17px; }
.mtab.sel { color: #d93025; fill: #d93025; border-bottom: 3px solid #d93025; border-radius: 2px 2px 0 0; padding-top: 3px; }
.mtab span { margin-top: -3px; }
.card { height: 130px; margin-top: 16px; width: 1113px; border: 1px solid #e4e6e9; border-radius: 8px; padding: 17px 24px; flex: none; }
.card-title { font: 500 16px/20px Inter, sans-serif; letter-spacing: .1px; color: #202124; }
.card-items { display: flex; margin-top: 19px; }
.ci { width: 265px; display: flex; align-items: center; gap: 24px; line-height: 20px; letter-spacing: .2px; color: #3c4043; }
.ci div { width: 48px; height: 48px; border-radius: 50%; display: flex; align-items: center; justify-content: center; }
.ci svg { width: 20px; height: 20px; }
.blue div { background: #e8f0fe; fill: #4285f4; }
.red div { background: #fce8e6; fill: #d93025; }
.row { height: 40px; width: 1113px; border-bottom: 1px solid #ececec; display: flex; align-items: center; padding: 0 0 2px 18px; letter-spacing: .2px; flex: none; }
.card + .row { margin-top: 16px; }
.row .box { margin-top: 2px; }
.row svg { width: 17px; height: 17px; margin: 2px 11px 0 14px; fill: #d0d0d0; }
.row b { font-weight: 700; letter-spacing: .2px; white-space: nowrap; }
.row .from { width: 200px; }
.row span { color: #5f6368; }
.mfoot { display: flex; padding: 132px 0 0 16px; font-size: 12px; color: #5f6368; letter-spacing: .3px; fill: #777b80; }
.storage { width: 220px; }
.bar { height: 6px; border-radius: 3px; background: #dadce0; }
.used { display: flex; align-items: center; height: 34px; gap: 10px; white-space: nowrap; }
.used svg { width: 14px; height: 14px; margin-bottom: 2px; }
.terms { margin: -4px 0 0 215px; white-space: nowrap; }

/* side rail */
.rail { width: 56px; border-left: 1px solid #ececec; display: flex; flex-direction: column; align-items: center; padding-top: 18px; fill: #757575; }
.r-ico { width: 20px; height: 20px; margin-bottom: 36px; }
.r-sep { width: 20px; height: 1px; background: #dadce0; margin-top: -2px; }
.r-plus { width: 12px; height: 12px; margin-top: 38px; }
.r-chev { width: 20px; height: 20px; margin: auto 2px 18px 0; fill: #444; }

/* notification toast */
.toast { position: absolute; left: 24px; top: 713px; width: 475px; height: 52px; background: #202124; border-radius: 4px; box-shadow: 0 1px 3px rgba(60,64,67,.3), 0 4px 8px 3px rgba(60,64,67,.15); color: #fff; display: flex; align-items: center; padding: 0 20px 2px 24px; }
.toast span { letter-spacing: .15px; font-weight: 500; }
.toast b { font: 500 14px Inter, sans-serif; color: #8ab4f8; white-space: nowrap; margin-top: -1px; }
.toast .ok { margin-left: 24px; }
.toast .no { margin-left: 26px; }
.toast svg { width: 12px; height: 12px; margin: 2px 0 0 auto; fill: #ccc; }

/* compose window */
.mail { position: absolute; left: 769px; top: 113px; width: 600px; height: 676px; background: #fff; border-radius: 8px 8px 0 0; box-shadow: 0 6px 16px rgba(0,0,0,.28), 0 0 8px rgba(0,0,0,.25); display: flex; flex-direction: column; }
.mail-head { height: 40px; background: #404040; border-radius: 8px 8px 0 0; color: #fff; font-weight: 700; letter-spacing: .13px; padding: 0 13px 2px 16px; display: flex; align-items: center; justify-content: space-between; }
.mh { width: 60px; height: 12px; fill: #c8c8c8; margin-top: 2px; }
.field { height: 36px; margin: 0 16px; border-bottom: 1px solid #ececec; display: flex; align-items: center; padding-bottom: 1px; }
.letter { height: 504px; display: flex; justify-content: space-between; }
.text { margin-top: -1px; padding-left: 16px; font: 23.5px/33px "Liberation Serif", serif; color: #3d4b53; white-space: nowrap; letter-spacing: .4px; }
.text .gap { margin-top: 33px; }
.text u { text-decoration: underline wavy #4a86e8 1px; text-underline-offset: 1px; text-decoration-skip-ink: none; }
.l1 { letter-spacing: .2px; }
.l2 { letter-spacing: .5px; }
.l3 { letter-spacing: .12px; }
.l4 { letter-spacing: .37px; }
.l5 { letter-spacing: .23px; }
.l6 { letter-spacing: .21px; }
.l7 { letter-spacing: .28px; }
.l8 { letter-spacing: .07px; }
.l10 { letter-spacing: .2px; }
.scroll { width: 9px; flex: none; height: 437px; margin: 67px 17px 0 0; background: #c8c8c8; border: 1px solid #b5b5b5; border-bottom: 0; }
.mail-foot { height: 60px; padding: 11px 19px 0 16px; display: flex; align-items: flex-start; fill: #707275; }
.send { width: 97px; height: 36px; border-radius: 4px; background: #1a73e8; color: #fff; font: 600 14px Inter, sans-serif; display: flex; align-items: center; }
.send span { width: 72px; text-align: center; margin-top: -2px; letter-spacing: -.1px; }
.send div { width: 25px; height: 36px; border-left: 1px solid #1559b5; display: flex; align-items: center; justify-content: center; }
.send svg { width: 8px; height: 4px; fill: #fff; }
.tools { display: flex; gap: 12px; margin: 7px 0 0 12px; }
.tools svg { width: 20px; height: 20px; }
.f-dots { width: 6px; height: 15px; margin: 9px 18px 0 auto; }
.f-trash { width: 14px; height: 17px; margin-top: 8px; }

/* taskbar */
.taskbar { height: 40px; background: linear-gradient(90deg, #223840, #20343f 45%, #1b2c40 75%, #1b2542); display: flex; color: #fff; font: 13px "Open Sans", sans-serif; flex: none; }
.tb { width: 49px; height: 40px; display: flex; align-items: center; justify-content: center; flex: none; position: relative; }
.tb.sys { width: 48px; }
.apps { display: flex; margin-left: 2px; padding-left: 1px; }
.tb.run::after { content: ""; position: absolute; left: 4px; right: 5px; bottom: 0; height: 2px; background: #b5b3b5; }
.tb.act { background: #52626a; border-bottom: 2px solid #c0bebf; width: 48px; margin-right: 1px; }
.tray { margin-left: auto; display: flex; align-items: center; height: 40px; }
.temp { margin-left: 9px; width: 38px; letter-spacing: -.2px; }
.haze { width: 41px; letter-spacing: .05px; }
.sysico { width: 192px; height: 20px; }
.stack { display: flex; flex-direction: column; align-items: center; font-size: 12px; line-height: 18px; letter-spacing: -.5px; }
.lang { width: 36px; }
.clock { width: 64px; }
.notif { width: 40px; height: 40px; background: #2a3150; display: flex; align-items: center; justify-content: center; padding: 5px 0 0 5px; }
.peek { width: 5px; height: 40px; margin-left: 8px; border-left: 1px solid #6b7287; }
```
